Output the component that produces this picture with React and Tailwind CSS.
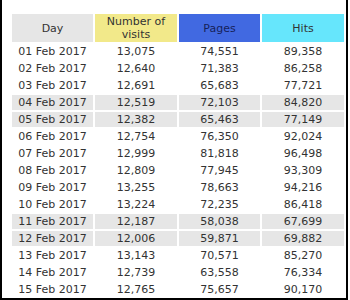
import React from 'react';

const rows = [
  ['01 Feb 2017', '13,075', '74,551', '89,358'],
  ['02 Feb 2017', '12,640', '71,383', '86,258'],
  ['03 Feb 2017', '12,691', '65,683', '77,721'],
  ['04 Feb 2017', '12,519', '72,103', '84,820', true],
  ['05 Feb 2017', '12,382', '65,463', '77,149', true],
  ['06 Feb 2017', '12,754', '76,350', '92,024'],
  ['07 Feb 2017', '12,999', '81,818', '96,498'],
  ['08 Feb 2017', '12,809', '77,945', '93,309'],
  ['09 Feb 2017', '13,255', '78,663', '94,216'],
  ['10 Feb 2017', '13,224', '72,235', '86,418'],
  ['11 Feb 2017', '12,187', '58,038', '67,699', true],
  ['12 Feb 2017', '12,006', '59,871', '69,882', true],
  ['13 Feb 2017', '13,143', '70,571', '85,270'],
  ['14 Feb 2017', '12,739', '63,558', '76,334'],
  ['15 Feb 2017', '12,765', '75,657', '90,170'],
];

export default function App() {
  return (
    <div className="w-[348px] h-[300px] overflow-hidden bg-white border-l-2 border-r-2 border-b-2 border-black pl-2 pt-3 font-['DejaVu_Sans',Verdana,sans-serif] text-[11px] text-[#333]">
      <table className="border-separate border-spacing-[2px] table-fixed">
        <colgroup>
          <col className="w-[81px]" />
          <col className="w-[82px]" />
          <col className="w-[81px]" />
          <col className="w-[82px]" />
        </colgroup>
        <thead>
          <tr className="h-[28px]">
            <th className="p-0 font-normal text-center leading-[13px] bg-[#e6e6e6]">Day</th>
            <th className="p-0 font-normal text-center leading-[13px] bg-[#f2e98a]">Number of<br />visits</th>
            <th className="p-0 font-normal text-center leading-[13px] bg-[#4169e1] text-[#16225a]">Pages</th>
            <th className="p-0 font-normal text-center leading-[13px] bg-[#66e6fc]">Hits</th>
          </tr>
        </thead>
        <tbody>
          {rows.map(([day, visits, pages, hits, weekend]) => {
            const cell = `p-0 text-center leading-[15px] ${weekend ? 'bg-[#e6e6e6]' : ''}`;
            return (
              <tr key={day} className="h-[15px]">
                <td className={cell}>{day}</td>
                <td className={cell}>{visits}</td>
                <td className={cell}>{pages}</td>
                <td className={cell}>{hits}</td>
              </tr>
            );
          })}
        </tbody>
      </table>
    </div>
  );
}
